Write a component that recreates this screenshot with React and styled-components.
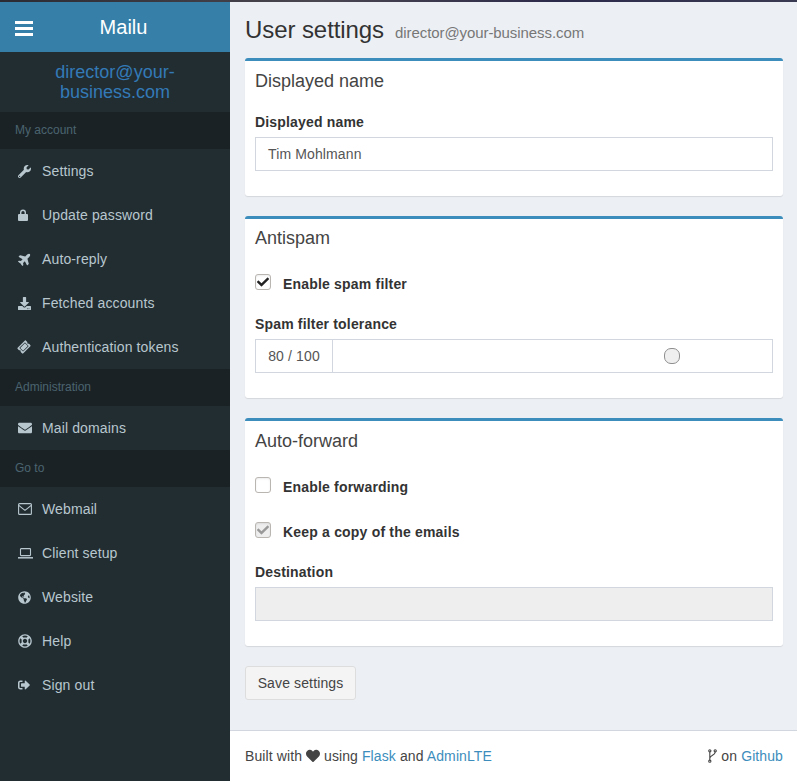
import React from 'react'
import styled, { createGlobalStyle } from 'styled-components'
import {
  FaWrench, FaPlane, FaDownload, FaTicketAlt, FaEnvelope,
  FaGlobeAmericas, FaRegLifeRing, FaSignOutAlt, FaHeart, FaCheck,
} from 'react-icons/fa'

const GlobalStyle = createGlobalStyle`
  html, body { margin: 0; padding: 0; height: 100%; }
  body {
    font-family: "Liberation Sans", Arial, sans-serif;
    font-size: 14px;
    line-height: 20px;
    color: #333;
    background: #ecf0f5;
  }
  * { box-sizing: border-box; }
`

const Page = styled.div`
  width: 797px;
  height: 781px;
  display: flex;
  flex-direction: column;
  overflow: hidden;
`

const TopStrip = styled.div`
  height: 2px;
  flex: none;
  background: linear-gradient(90deg, #2b2b33 0%, #4a4650 40%, #2c2a4a 70%, #3a3a52 100%);
`

const Body = styled.div`
  flex: 1;
  display: flex;
  min-height: 0;
`

const Sidebar = styled.aside`
  width: 230px;
  flex: none;
  background: #222d32;
  display: flex;
  flex-direction: column;
`

const Brand = styled.div`
  height: 50px;
  flex: none;
  background: #367fa9;
  color: #fff;
  display: flex;
  align-items: center;
  position: relative;
  justify-content: center;
  font-size: 20px;
  padding-left: 17px;
  padding-bottom: 1px;
`

const BurgerIcon = styled.svg`
  position: absolute;
  left: 15px;
  top: 19px;
  width: 18px;
  height: 15px;
`

const UserMail = styled.div`
  height: 60px;
  flex: none;
  padding: 10px 10px 0;
  text-align: center;
  color: #337ab7;
  font-size: 18px;
  line-height: 20px;
`

const SectionHead = styled.div`
  height: 37px;
  flex: none;
  background: #1a2226;
  color: #4b646f;
  font-size: 12px;
  padding: 0 0 2px 15px;
  display: flex;
  align-items: center;
`

const NavItem = styled.a`
  height: 44px;
  flex: none;
  display: flex;
  align-items: center;
  color: #b8c7ce;
  font-size: 14px;
  letter-spacing: 0.13px;
`

const NavIcon = styled.span`
  width: 42px;
  flex: none;
  padding-left: 18px;
  display: flex;
  align-items: center;
  svg {
    height: ${({ $size }) => $size || 14}px;
    width: auto;
    transform: rotate(${({ $turn }) => $turn || 0}deg);
  }
`

const Main = styled.main`
  flex: 1;
  min-width: 0;
  display: flex;
  flex-direction: column;
`

const Content = styled.div`
  flex: 1;
  padding: 0 14px 0 15px;
`

const TitleRow = styled.div`
  height: 56px;
  display: flex;
  align-items: baseline;
  padding-top: 13px;
  gap: 11px;
`

const Title = styled.h1`
  margin: 0;
  font-size: 24px;
  line-height: 29px;
  font-weight: 400;
  color: #333;
  letter-spacing: -0.08px;
`

const SubTitle = styled.small`
  font-size: 15px;
  color: #777;
  letter-spacing: -0.08px;
`

const Card = styled.section`
  background: #fff;
  border-top: 3px solid #3c8dbc;
  border-radius: 3px;
  box-shadow: 0 1px 1px rgba(0, 0, 0, 0.1);
  margin-bottom: 20px;
  height: ${({ $h }) => $h}px;
`

const CardTitle = styled.h3`
  margin: 0;
  padding: ${({ $top }) => $top ?? 10}px 10px 0;
  font-size: 18px;
  line-height: 20px;
  font-weight: 400;
  color: #444;
`

const CardBody = styled.div`
  padding: ${({ $top }) => $top}px 10px 0;
`

const Label = styled.label`
  display: block;
  font-weight: 700;
  margin-bottom: 5px;
  line-height: 20px;
  color: #333;
  letter-spacing: 0.17px;
`

const Input = styled.div`
  height: 34px;
  border: 1px solid #d2d6de;
  padding: 6px 12px;
  color: #555;
  letter-spacing: 0.13px;
  background: ${({ disabled }) => (disabled ? '#eee' : '#fff')};
`

const CheckRow = styled.div`
  display: flex;
  align-items: center;
  height: 20px;
  font-weight: 700;
  letter-spacing: 0.19px;
  margin-bottom: ${({ $mb }) => $mb}px;
  gap: 12px;
`

const CheckBox = styled.span`
  width: 16px;
  height: 16px;
  flex: none;
  border: 1px solid #b9b5b0;
  border-radius: 3px;
  box-shadow: inset 0 1px 2px rgba(0, 0, 0, 0.08);
  margin-top: -4px;
  display: flex;
  align-items: center;
  justify-content: center;
  color: ${({ $muted }) => ($muted ? '#999' : '#222')};
  background: ${({ $muted }) => ($muted ? '#eee' : '#fff')};
  svg { font-size: 12px; }
`

const RangeGroup = styled.div`
  display: flex;
  height: 34px;
  border: 1px solid #d2d6de;
`

const RangeValue = styled.div`
  width: 77px;
  flex: none;
  border-right: 1px solid #d2d6de;
  display: flex;
  align-items: center;
  justify-content: center;
  color: #555;
  letter-spacing: 0.13px;
`

const RangeTrack = styled.div`
  flex: 1;
  position: relative;
`

const RangeThumb = styled.span`
  position: absolute;
  top: 8px;
  left: 331px;
  width: 16px;
  height: 16px;
  border-radius: 7px;
  background: #efefef;
  border: 1px solid #8f8f8f;
`

const SaveButton = styled.button`
  display: block;
  height: 34px;
  width: 111px;
  padding: 0;
  font: inherit;
  letter-spacing: 0.13px;
  color: #444;
  background: #f4f4f4;
  border: 1px solid #ddd;
  border-radius: 3px;
`

const Footer = styled.footer`
  height: 51px;
  flex: none;
  background: #fff;
  border-top: 1px solid #d2d6de;
  padding: 15px 14px 0 15px;
  display: flex;
  justify-content: space-between;
  color: #444;
  letter-spacing: 0.1px;
  svg { vertical-align: -2px; }
`

const FootLink = styled.a`
  color: #3c8dbc;
`

const LockIcon = () => (
  <svg viewBox="0 0 10 12" fill="currentColor">
    <path d="M2 5.5V3.6a3 3 0 0 1 6 0v1.9H6.6V3.6a1.6 1.6 0 0 0-3.2 0v1.9z" />
    <rect x="0" y="5" width="10" height="7" rx="1" />
  </svg>
)

const OutlineMailIcon = () => (
  <svg viewBox="0 0 14 12" fill="none" stroke="currentColor" strokeWidth="1.1">
    <rect x="0.6" y="0.6" width="12.8" height="10.8" rx="1" />
    <path d="M0.8 2.4 7 7.4l6.2-5" />
  </svg>
)

const LaptopIcon = () => (
  <svg viewBox="0 0 15 11" fill="none" stroke="currentColor" strokeWidth="1.1">
    <rect x="2.5" y="0.6" width="10" height="7" rx="0.6" />
    <path d="M0 9.8h15" strokeWidth="1.5" />
  </svg>
)

const ForkIcon = () => (
  <svg width="9" height="14" viewBox="0 0 9 14" fill="none" stroke="currentColor" strokeWidth="1.1">
    <circle cx="1.8" cy="1.8" r="1.1" />
    <circle cx="7.2" cy="1.8" r="1.1" />
    <circle cx="1.8" cy="12.2" r="1.1" />
    <path d="M1.8 3v8M7.2 3c0 3.6-5.4 2.8-5.4 6.5" />
  </svg>
)

const accountItems = [
  { Icon: FaWrench, label: 'Settings', size: 13 },
  { Icon: LockIcon, label: 'Update password', size: 12 },
  { Icon: FaPlane, label: 'Auto-reply', size: 14, turn: -45 },
  { Icon: FaDownload, label: 'Fetched accounts', size: 13 },
  { Icon: FaTicketAlt, label: 'Authentication tokens', size: 12, turn: -45 },
]

const gotoItems = [
  { Icon: OutlineMailIcon, label: 'Webmail', size: 12 },
  { Icon: LaptopIcon, label: 'Client setup', size: 11 },
  { Icon: FaGlobeAmericas, label: 'Website', size: 13 },
  { Icon: FaRegLifeRing, label: 'Help', size: 14 },
  { Icon: FaSignOutAlt, label: 'Sign out', size: 12 },
]

const Nav = ({ items }) => items.map(({ Icon, label, size, turn }) => (
  <NavItem key={label}>
    <NavIcon $size={size} $turn={turn}><Icon /></NavIcon>
    {label}
  </NavItem>
))

export default function App() {
  return (
    <Page>
      <GlobalStyle />
      <TopStrip />
      <Body>
        <Sidebar>
          <Brand>
            <BurgerIcon viewBox="0 0 18 15" fill="currentColor">
              <rect y="0" width="18" height="3" />
              <rect y="6" width="18" height="3" />
              <rect y="12" width="18" height="3" />
            </BurgerIcon>
            Mailu
          </Brand>
          <UserMail>director@your-business.com</UserMail>
          <SectionHead>My account</SectionHead>
          <Nav items={accountItems} />
          <SectionHead>Administration</SectionHead>
          <Nav items={[{ Icon: FaEnvelope, label: 'Mail domains', size: 14 }]} />
          <SectionHead>Go to</SectionHead>
          <Nav items={gotoItems} />
        </Sidebar>
        <Main>
          <Content>
            <TitleRow>
              <Title>User settings</Title>
              <SubTitle>director@your-business.com</SubTitle>
            </TitleRow>

            <Card $h={138}>
              <CardTitle>Displayed name</CardTitle>
              <CardBody $top={21}>
                <Label>Displayed name</Label>
                <Input>Tim Mohlmann</Input>
              </CardBody>
            </Card>

            <Card $h={182}>
              <CardTitle $top={9}>Antispam</CardTitle>
              <CardBody $top={26}>
                <CheckRow $mb={20}><CheckBox><FaCheck /></CheckBox>Enable spam filter</CheckRow>
                <Label>Spam filter tolerance</Label>
                <RangeGroup>
                  <RangeValue>80 / 100</RangeValue>
                  <RangeTrack><RangeThumb /></RangeTrack>
                </RangeGroup>
              </CardBody>
            </Card>

            <Card $h={228}>
              <CardTitle>Auto-forward</CardTitle>
              <CardBody $top={26}>
                <CheckRow $mb={25}><CheckBox />Enable forwarding</CheckRow>
                <CheckRow $mb={20}><CheckBox $muted><FaCheck /></CheckBox>Keep a copy of the emails</CheckRow>
                <Label>Destination</Label>
                <Input disabled />
              </CardBody>
            </Card>

            <SaveButton>Save settings</SaveButton>
          </Content>
          <Footer>
            <span>Built with <FaHeart /> using <FootLink>Flask</FootLink> and <FootLink>AdminLTE</FootLink></span>
            <span><ForkIcon /> on <FootLink>Github</FootLink></span>
          </Footer>
        </Main>
      </Body>
    </Page>
  )
}
